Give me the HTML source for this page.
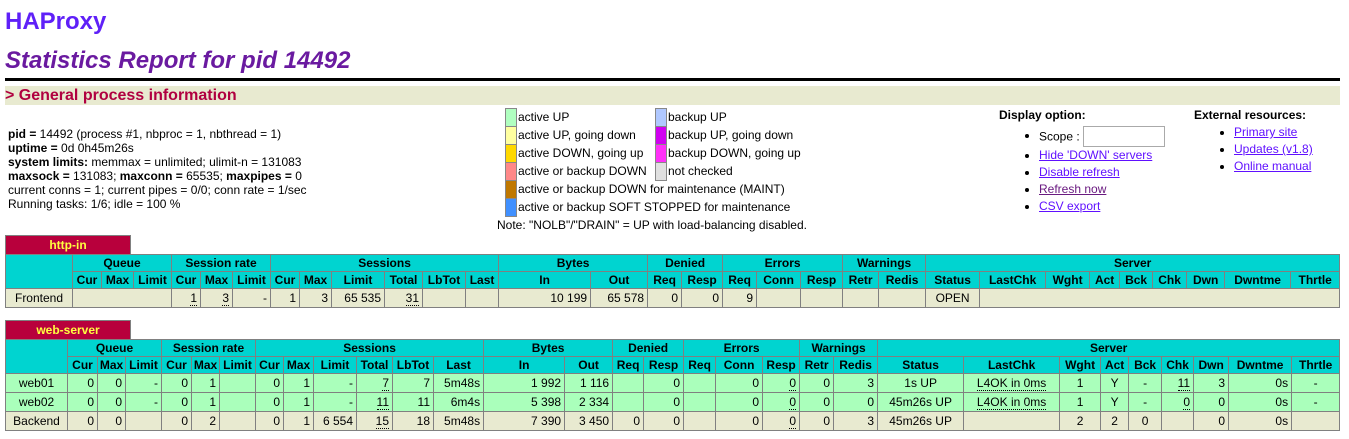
<!DOCTYPE html>
<html><head><meta charset="utf-8"><style>
body{margin:0;font-family:"Liberation Sans",Arial,sans-serif;font-size:12px;color:#000;background:#fff;width:1349px;height:439px;overflow:hidden;position:relative}
.abs{position:absolute}
h1{position:absolute;left:5px;top:7px;margin:0;font-size:24px;font-weight:bold;color:#5f20f8;line-height:30px}
h2{position:absolute;left:5px;top:46px;margin:0;font-size:24px;font-weight:bold;font-style:italic;color:#6a1aa0;line-height:30px}
.hr{position:absolute;left:5px;top:78px;width:1335px;height:3px;background:#000}
h3{position:absolute;left:5px;top:86px;width:1335px;height:19px;margin:0;font-size:16px;font-weight:bold;color:#b00040;background:#e8ead0;line-height:19px}
.info{left:8px;top:127px;line-height:14px;font-size:12px}
.lg{left:505px;top:108px}
.lgrow{position:absolute;height:18px;line-height:18px;white-space:nowrap;font-size:12px}
.sw{position:absolute;width:10px;height:17px;border:1px solid #888;left:0;top:0}
.lgrow span{position:absolute;left:13px}
a{color:#6010ff;text-decoration:underline}
.dopt{left:999px;top:108px;font-size:12px}
.bul{position:absolute;white-space:nowrap}
.bul:before{content:"";position:absolute;left:-14px;top:6px;width:4px;height:4px;border-radius:50%;background:#000}
.px{position:absolute;left:5px;width:123px;height:19px;background:#b8003c;color:#ffff40;font-weight:bold;text-align:center;line-height:19px;border:1px solid gray;border-bottom:none;box-sizing:border-box;width:126px}
table.tbl{position:absolute;left:5px;border-collapse:collapse;table-layout:fixed;font-size:12px}
table.tbl td{text-align:right;border:1px solid gray;padding:2px 3px;white-space:nowrap;height:14px;line-height:14px;overflow:hidden}
table.tbl td.ac{text-align:center}
table.tbl th{border:1px solid gray;padding:1px 0;line-height:14px;height:14px;background:#00d4d0;font-weight:bold;white-space:nowrap;overflow:hidden}
.fe td{background:#e8ead0}
.up td{background:#aaffbb}
.be td{background:#e8ead0}
u{text-decoration:none;border-bottom:1px dotted #000}
</style></head><body>
<h1>HAProxy</h1>
<h2>Statistics Report for pid 14492</h2>
<div class="hr"></div>
<h3>&gt; General process information</h3>

<div class="abs info"><b>pid = </b>14492 (process #1, nbproc = 1, nbthread = 1)<br><b>uptime = </b>0d 0h45m26s<br><b>system limits:</b> memmax = unlimited; ulimit-n = 131083<br><b>maxsock = </b>131083; <b>maxconn = </b>65535; <b>maxpipes = </b>0<br>current conns = 1; current pipes = 0/0; conn rate = 1/sec<br>Running tasks: 1/6; idle = 100 %</div>

<div class="abs lg">
<div class="lgrow" style="top:0"><div class="sw" style="background:#b0ffc0"></div><span>active UP</span></div>
<div class="lgrow" style="top:18px"><div class="sw" style="background:#ffffa0"></div><span>active UP, going down</span></div>
<div class="lgrow" style="top:36px"><div class="sw" style="background:#ffd800"></div><span>active DOWN, going up</span></div>
<div class="lgrow" style="top:54px"><div class="sw" style="background:#ff8888"></div><span>active or backup DOWN</span></div>
<div class="lgrow" style="top:72px"><div class="sw" style="background:#c07800"></div><span>active or backup DOWN for maintenance (MAINT)</span></div>
<div class="lgrow" style="top:90px"><div class="sw" style="background:#4090ff"></div><span>active or backup SOFT STOPPED for maintenance</span></div>
<div class="lgrow" style="left:150px;top:0"><div class="sw" style="background:#b0c8ff"></div><span>backup UP</span></div>
<div class="lgrow" style="left:150px;top:18px"><div class="sw" style="background:#d000f0"></div><span>backup UP, going down</span></div>
<div class="lgrow" style="left:150px;top:36px"><div class="sw" style="background:#ff30f8"></div><span>backup DOWN, going up</span></div>
<div class="lgrow" style="left:150px;top:54px"><div class="sw" style="background:#e0e0e0"></div><span>not checked</span></div>
<div class="lgrow" style="left:-8px;top:109px;line-height:16px">Note: "NOLB"/"DRAIN" = UP with load-balancing disabled.</div>
</div>

<div class="abs dopt">
<b style="position:absolute;left:0;top:0;white-space:nowrap">Display option:</b>
<div class="bul" style="left:40px;top:20px;line-height:16px">Scope : <span style="display:inline-block;vertical-align:middle;width:80px;height:19px;border:1px solid #aaa;margin-top:-2px"></span></div>
<div class="bul" style="left:40px;top:40px"><a>Hide 'DOWN' servers</a></div>
<div class="bul" style="left:40px;top:57px"><a>Disable refresh</a></div>
<div class="bul" style="left:40px;top:74px"><a style="color:#6a1a80">Refresh now</a></div>
<div class="bul" style="left:40px;top:91px"><a>CSV export</a></div>
<b style="position:absolute;left:195px;top:0;white-space:nowrap">External resources:</b>
<div class="bul" style="left:235px;top:17px"><a>Primary site</a></div>
<div class="bul" style="left:235px;top:34px"><a>Updates (v1.8)</a></div>
<div class="bul" style="left:235px;top:51px"><a>Online manual</a></div>
</div>

<div class="px" style="top:235px">http-in</div>
<table class="tbl" style="top:254px;width:1335px">
<colgroup><col style="width:67px"><col style="width:29px"><col style="width:32px"><col style="width:38px"><col style="width:29px"><col style="width:32px"><col style="width:38px"><col style="width:29px"><col style="width:32px"><col style="width:53px"><col style="width:38px"><col style="width:43px"><col style="width:33px"><col style="width:92px"><col style="width:57px"><col style="width:34px"><col style="width:41px"><col style="width:34px"><col style="width:44px"><col style="width:42px"><col style="width:36px"><col style="width:47px"><col style="width:54px"><col style="width:66px"><col style="width:44px"><col style="width:30px"><col style="width:33px"><col style="width:34px"><col style="width:38px"><col style="width:66px"><col style="width:49px"></colgroup>
<tr><th rowspan="2"></th><th colspan="3">Queue</th><th colspan="3">Session rate</th><th colspan="6">Sessions</th><th colspan="2">Bytes</th><th colspan="2">Denied</th><th colspan="3">Errors</th><th colspan="2">Warnings</th><th colspan="9">Server</th></tr>
<tr><th>Cur</th><th>Max</th><th>Limit</th><th>Cur</th><th>Max</th><th>Limit</th><th>Cur</th><th>Max</th><th>Limit</th><th>Total</th><th>LbTot</th><th>Last</th><th>In</th><th>Out</th><th>Req</th><th>Resp</th><th>Req</th><th>Conn</th><th>Resp</th><th>Retr</th><th>Redis</th><th>Status</th><th>LastChk</th><th>Wght</th><th>Act</th><th>Bck</th><th>Chk</th><th>Dwn</th><th>Dwntme</th><th>Thrtle</th></tr>
<tr class="fe"><td class="ac">Frontend</td><td colspan="3"></td><td><u>1</u></td><td><u>3</u></td><td>-</td><td>1</td><td>3</td><td>65 535</td><td><u>31</u></td><td></td><td></td><td>10 199</td><td>65 578</td><td>0</td><td>0</td><td>9</td><td></td><td></td><td></td><td></td><td class="ac">OPEN</td><td colspan="8"></td></tr>
</table>

<div class="px" style="top:320px">web-server</div>
<table class="tbl" style="top:339px;width:1335px">
<colgroup><col style="width:62px"><col style="width:30px"><col style="width:28px"><col style="width:36px"><col style="width:30px"><col style="width:28px"><col style="width:36px"><col style="width:28px"><col style="width:30px"><col style="width:43px"><col style="width:36px"><col style="width:41px"><col style="width:50px"><col style="width:81px"><col style="width:48px"><col style="width:31px"><col style="width:40px"><col style="width:32px"><col style="width:47px"><col style="width:37px"><col style="width:34px"><col style="width:44px"><col style="width:86px"><col style="width:96px"><col style="width:41px"><col style="width:28px"><col style="width:33px"><col style="width:32px"><col style="width:35px"><col style="width:63px"><col style="width:48px"></colgroup>
<tr><th rowspan="2"></th><th colspan="3">Queue</th><th colspan="3">Session rate</th><th colspan="6">Sessions</th><th colspan="2">Bytes</th><th colspan="2">Denied</th><th colspan="3">Errors</th><th colspan="2">Warnings</th><th colspan="9">Server</th></tr>
<tr><th>Cur</th><th>Max</th><th>Limit</th><th>Cur</th><th>Max</th><th>Limit</th><th>Cur</th><th>Max</th><th>Limit</th><th>Total</th><th>LbTot</th><th>Last</th><th>In</th><th>Out</th><th>Req</th><th>Resp</th><th>Req</th><th>Conn</th><th>Resp</th><th>Retr</th><th>Redis</th><th>Status</th><th>LastChk</th><th>Wght</th><th>Act</th><th>Bck</th><th>Chk</th><th>Dwn</th><th>Dwntme</th><th>Thrtle</th></tr>
<tr class="up"><td class="ac">web01</td><td>0</td><td>0</td><td>-</td><td>0</td><td>1</td><td></td><td>0</td><td>1</td><td>-</td><td><u>7</u></td><td>7</td><td>5m48s</td><td>1 992</td><td>1 116</td><td></td><td>0</td><td></td><td>0</td><td><u>0</u></td><td>0</td><td>3</td><td class="ac">1s UP</td><td class="ac"><u>L4OK in 0ms</u></td><td class="ac">1</td><td class="ac">Y</td><td class="ac">-</td><td><u>11</u></td><td>3</td><td>0s</td><td class="ac">-</td></tr>
<tr class="up"><td class="ac">web02</td><td>0</td><td>0</td><td>-</td><td>0</td><td>1</td><td></td><td>0</td><td>1</td><td>-</td><td><u>11</u></td><td>11</td><td>6m4s</td><td>5 398</td><td>2 334</td><td></td><td>0</td><td></td><td>0</td><td><u>0</u></td><td>0</td><td>0</td><td class="ac">45m26s UP</td><td class="ac"><u>L4OK in 0ms</u></td><td class="ac">1</td><td class="ac">Y</td><td class="ac">-</td><td><u>0</u></td><td>0</td><td>0s</td><td class="ac">-</td></tr>
<tr class="be"><td class="ac">Backend</td><td>0</td><td>0</td><td></td><td>0</td><td>2</td><td></td><td>0</td><td>1</td><td>6 554</td><td><u>15</u></td><td>18</td><td>5m48s</td><td>7 390</td><td>3 450</td><td>0</td><td>0</td><td></td><td>0</td><td><u>0</u></td><td>0</td><td>3</td><td class="ac">45m26s UP</td><td></td><td class="ac">2</td><td class="ac">2</td><td class="ac">0</td><td></td><td>0</td><td>0s</td><td></td></tr>
</table>
</body></html>
